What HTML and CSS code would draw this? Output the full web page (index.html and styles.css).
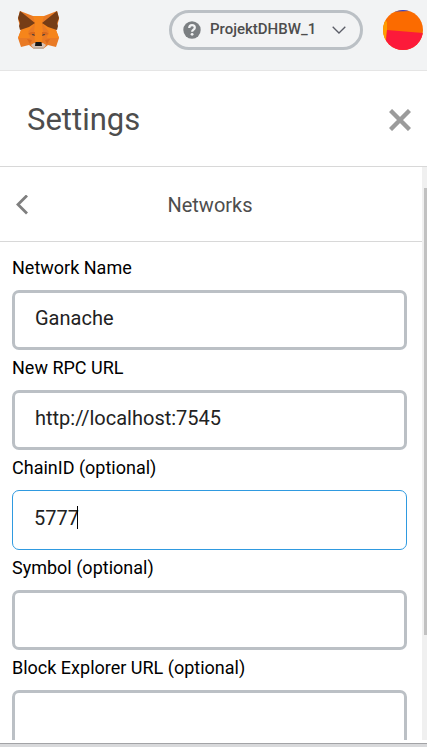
FILE: index.html
```html
<!DOCTYPE html>
<html lang="en">
<head>
<meta charset="utf-8">
<meta name="viewport" content="width=device-width, initial-scale=1">
<title>Settings</title>
<link rel="stylesheet" href="styles.css">
</head>
<body>
<header class="app-header">
  <svg class="fox" viewBox="0 0 41 40" role="img" aria-label="MetaMask">
    <path fill="#e97a25" d="M2 1 15 6H26L39 1 41 9 38 20 41 28 38 37 30 35 25 39H16L11 35 3 37 0 28 3 20 0 9Z"/>
    <path fill="#f6851b" d="M15 6H26L24 13 25 22 24 33H17L16 22 17 13ZM3 20 10 21 12 28 0 28ZM38 20 31 21 29 28 41 28Z"/>
    <path fill="#f6851b" d="M3 20 17 13 10 22ZM38 20 24 13 31 22Z"/>
    <path fill="#763d16" d="M2 1 17 13 11 17 2 20 1 16 2 13 0 8ZM39 1 24 13 30 17 39 20 40 16 39 13 41 8Z"/>
    <path fill="#d9691c" d="M10 24 13 22 17 22 17 26ZM31 24 28 22 24 22 24 26ZM9 29 14 30 12 34ZM32 29 27 30 29 34Z"/>
    <path fill="#5d4636" d="M14 24 16 24 17 26 14 25ZM27 24 25 24 24 26 27 25Z"/>
    <path fill="#d7c1b3" d="M13 35 16 33H25L28 35 25 39H16Z"/>
    <path fill="#c0ad9e" d="M15 37H26L25 39H16Z"/>
    <path fill="#161616" d="M17.500 32H23.500L24 36H17Z"/>
  </svg>
  <button class="network" type="button">
    <svg class="network-icon" viewBox="0 0 18 18" aria-hidden="true">
      <circle cx="9" cy="9" r="8.7" fill="#7b7f82"/>
      <path d="M6.2 7C6.3 5.1 7.4 4.2 9 4.2S11.8 5.2 11.8 6.7C11.8 8.6 9.1 8.7 9.1 10.8" fill="none" stroke="#f2f3f4" stroke-width="2.2"/>
      <circle cx="9.1" cy="13.3" r="1.4" fill="#f2f3f4"/>
    </svg>
    <span class="network-name">ProjektDHBW_1</span>
    <svg class="chevron" viewBox="0 0 14 8" aria-hidden="true"><path d="M.7.7 7 7 13.3.7" fill="none" stroke="#5b5d67" stroke-width="1.3"/></svg>
  </button>
  <button class="account" type="button" aria-label="Account">
    <svg viewBox="0 0 40 40" aria-hidden="true">
      <clipPath id="disc"><circle cx="20" cy="20" r="20"/></clipPath>
      <g clip-path="url(#disc)">
        <path fill="#fb6b00" d="M0 0H40V40H0Z"/>
        <path fill="#2a46d8" d="M12 0H28V1L12 1.5Z"/>
        <path fill="#ff9d00" d="M0 8 4 12 4 20 2 40H0Z"/>
        <path fill="#fc1a3a" d="M4 20 40 23V40H2Z"/>
      </g>
    </svg>
  </button>
</header>
<div class="title-bar">
  <h1>Settings</h1>
  <button class="close" type="button" aria-label="Close">
    <svg viewBox="0 0 22 22" aria-hidden="true"><path d="M1.5 1.5 20.5 20.5M20.5 1.5 1.5 20.5" stroke="#9b9b9b" stroke-width="4.4"/></svg>
  </button>
</div>
<div class="viewport">
  <main class="content">
    <div class="subheader">
      <button class="back" type="button" aria-label="Back">
        <svg viewBox="0 0 12 20" aria-hidden="true"><path d="M11 0.500 2 9.500 11 18.500" fill="none" stroke="#7f7f7f" stroke-width="2.8"/></svg>
      </button>
      <h2>Networks</h2>
    </div>
    <form class="form">
      <div class="field"><label for="name">Network Name</label><input id="name" type="text" value="Ganache"></div>
      <div class="field"><label for="rpc">New RPC URL</label><input id="rpc" type="text" value="http://localhost:7545"></div>
      <div class="field"><label for="chain">ChainID (optional)</label><input id="chain" class="active" type="text" value="5777"><span class="caret"></span></div>
      <div class="field"><label for="symbol">Symbol (optional)</label><input id="symbol" type="text"></div>
      <div class="field"><label for="explorer">Block Explorer URL (optional)</label><input id="explorer" type="text"></div>
    </form>
  </main>
  <div class="track"><div class="thumb"></div></div>
</div>
<footer class="window-edge"></footer>
</body>
</html>
```
FILE: styles.css
```css
* {
  box-sizing: border-box;
}

body {
  margin: 0;
  height: 100vh;
  display: flex;
  flex-direction: column;
  overflow: hidden;
  background: #fff;
  color: #000;
  font-family: Roboto, sans-serif;
}

button {
  padding: 0;
  border: 0;
  background: none;
  font: inherit;
  cursor: pointer;
}

svg {
  display: block;
}

h1,
h2 {
  margin: 0;
  color: #4d4d4d;
  font-weight: 400;
}

.app-header {
  flex: none;
  display: flex;
  align-items: center;
  padding: 10px 4px 20px 18px;
  background: #f2f3f4;
  border-bottom: 1px solid #e5e5e5;
}

.fox {
  width: 41px;
  height: 40px;
}

.network {
  display: flex;
  align-items: center;
  width: 194px;
  height: 40px;
  margin-left: auto;
  padding: 0 14px 0 11px;
  border: 3px solid #bbc0c5;
  border-radius: 20px;
}

.network-icon {
  width: 18px;
  height: 18px;
  margin-right: 9px;
}

.network-name {
  padding-bottom: 2px;
  color: #4d4d4d;
  font-size: 15px;
  font-weight: 500;
  line-height: 20px;
}

.chevron {
  width: 14px;
  height: 8px;
  margin-left: auto;
}

.account {
  width: 40px;
  height: 40px;
  margin-left: 20px;
}

.title-bar {
  flex: none;
  display: flex;
  align-items: center;
  justify-content: space-between;
  height: 96px;
  padding: 2px 16px 0 27px;
  border-bottom: 1px solid #d8d8d8;
}

h1 {
  font-size: 31px;
  line-height: 40px;
}

.close {
  width: 22px;
  height: 22px;
}

.viewport {
  flex: 1;
  min-height: 0;
  display: flex;
}

.content {
  flex: 1;
  min-width: 0;
  overflow: hidden;
}

.subheader {
  display: grid;
  grid-template-columns: 12px 1fr 12px;
  align-items: center;
  height: 75px;
  padding: 2px 18px 0 16px;
  border-bottom: 1px solid #d8d8d8;
}

.back {
  width: 12px;
  height: 20px;
}

h2 {
  font-size: 20px;
  line-height: 24px;
  text-align: center;
}

.form {
  padding: 12px 15px 12px 12px;
}

.field {
  position: relative;
  height: 100px;
}

.field label {
  display: block;
  height: 36px;
  font-size: 18px;
  line-height: 28px;
}

.field input {
  display: block;
  width: 100%;
  height: 60px;
  padding: 0 20px 4px;
  border: 3px solid #bbc0c5;
  border-radius: 7px;
  outline: 0;
  background: #fff;
  color: #222;
  font: 400 20px Roboto, sans-serif;
}

.field .active {
  padding: 0 21px 4px;
  border: 1px solid #2f9ae0;
}

.caret {
  position: absolute;
  top: 52px;
  left: 65px;
  width: 1px;
  height: 23px;
  background: #000;
}

.track {
  flex: none;
  width: 5px;
  padding: 21px 0 0 2px;
  background: #f0f0f0;
}

.thumb {
  height: 81%;
  background: #c1c1c1;
}

.window-edge {
  flex: none;
  height: 7px;
  border-top: 3px solid #fff;
  background: linear-gradient(#a2a3a6 1px, #d8d9db 1px);
}
```
